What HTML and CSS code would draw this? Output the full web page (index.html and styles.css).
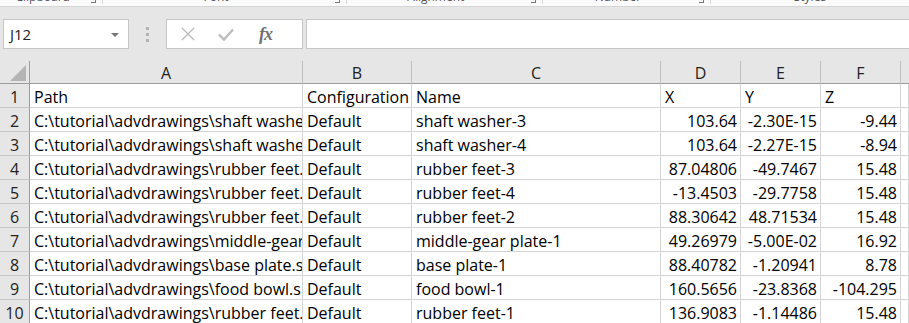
FILE: index.html
```html
<!DOCTYPE html>
<html lang="en">
<head>
  <meta charset="UTF-8" />
  <title>Book1 - Excel</title>
  <link rel="stylesheet" href="styles.css">
</head>
<body>

  <!-- bottom edge of the ribbon, group captions cut off -->
  <div class="ribbon">
    <div class="group g-clip"><span class="caption">Clipboard</span><i class="launch"></i></div>
    <div class="group g-font"><span class="caption">Font</span><i class="launch"></i></div>
    <div class="group g-align"><span class="caption">Alignment</span><i class="launch"></i></div>
    <div class="group g-num"><span class="caption">Number</span><i class="launch"></i></div>
    <div class="group g-styles"><span class="caption">Styles</span></div>
  </div>

  <!-- name box + formula bar -->
  <div class="formula-bar">
    <div class="name-box">
      <span>J12</span>
      <i class="drop"></i>
    </div>
    <div class="grip"><i></i><i></i><i></i></div>
    <div class="fx-buttons">
      <svg class="icon" width="16" height="16" viewBox="0 0 16 16">
        <path d="M2 2 L14 14 M14 2 L2 14" stroke="#bcbcbc" stroke-width="1.4" fill="none"/>
      </svg>
      <svg class="icon" width="18" height="16" viewBox="0 0 18 16">
        <path d="M2 8.5 L7 13.5 L16 3.5" stroke="#bcbcbc" stroke-width="2.4" fill="none"/>
      </svg>
      <span class="fx">fx</span>
    </div>
    <div class="formula-input"></div>
  </div>

  <!-- the sheet -->
  <div class="sheet">
    <div class="corner"><i class="select-all"></i></div>
    <div class="col-head">A</div>
    <div class="col-head">B</div>
    <div class="col-head">C</div>
    <div class="col-head">D</div>
    <div class="col-head">E</div>
    <div class="col-head">F</div>
    <div class="col-head last"></div>

    <div class="row-head">1</div>
    <div class="cell">Path</div>
    <div class="cell">Configuration</div>
    <div class="cell">Name</div>
    <div class="cell">X</div>
    <div class="cell">Y</div>
    <div class="cell">Z</div>
    <div class="cell"></div>

    <div class="row-head">2</div>
    <div class="cell">C:\tutorial\advdrawings\shaft washer.sldprt</div>
    <div class="cell">Default</div>
    <div class="cell">shaft washer-3</div>
    <div class="cell num">103.64</div>
    <div class="cell num">-2.30E-15</div>
    <div class="cell num">-9.44</div>
    <div class="cell"></div>

    <div class="row-head">3</div>
    <div class="cell">C:\tutorial\advdrawings\shaft washer.sldprt</div>
    <div class="cell">Default</div>
    <div class="cell">shaft washer-4</div>
    <div class="cell num">103.64</div>
    <div class="cell num">-2.27E-15</div>
    <div class="cell num">-8.94</div>
    <div class="cell"></div>

    <div class="row-head">4</div>
    <div class="cell">C:\tutorial\advdrawings\rubber feet.sldprt</div>
    <div class="cell">Default</div>
    <div class="cell">rubber feet-3</div>
    <div class="cell num">87.04806</div>
    <div class="cell num">-49.7467</div>
    <div class="cell num">15.48</div>
    <div class="cell"></div>

    <div class="row-head">5</div>
    <div class="cell">C:\tutorial\advdrawings\rubber feet.sldprt</div>
    <div class="cell">Default</div>
    <div class="cell">rubber feet-4</div>
    <div class="cell num">-13.4503</div>
    <div class="cell num">-29.7758</div>
    <div class="cell num">15.48</div>
    <div class="cell"></div>

    <div class="row-head">6</div>
    <div class="cell">C:\tutorial\advdrawings\rubber feet.sldprt</div>
    <div class="cell">Default</div>
    <div class="cell">rubber feet-2</div>
    <div class="cell num">88.30642</div>
    <div class="cell num">48.71534</div>
    <div class="cell num">15.48</div>
    <div class="cell"></div>

    <div class="row-head">7</div>
    <div class="cell">C:\tutorial\advdrawings\middle-gear plate.sldprt</div>
    <div class="cell">Default</div>
    <div class="cell">middle-gear plate-1</div>
    <div class="cell num">49.26979</div>
    <div class="cell num">-5.00E-02</div>
    <div class="cell num">16.92</div>
    <div class="cell"></div>

    <div class="row-head">8</div>
    <div class="cell">C:\tutorial\advdrawings\base plate.sldprt</div>
    <div class="cell">Default</div>
    <div class="cell">base plate-1</div>
    <div class="cell num">88.40782</div>
    <div class="cell num">-1.20941</div>
    <div class="cell num">8.78</div>
    <div class="cell"></div>

    <div class="row-head">9</div>
    <div class="cell">C:\tutorial\advdrawings\food bowl.sldprt</div>
    <div class="cell">Default</div>
    <div class="cell">food bowl-1</div>
    <div class="cell num">160.5656</div>
    <div class="cell num">-23.8368</div>
    <div class="cell num">-104.295</div>
    <div class="cell"></div>

    <div class="row-head">10</div>
    <div class="cell">C:\tutorial\advdrawings\rubber feet.sldprt</div>
    <div class="cell">Default</div>
    <div class="cell">rubber feet-1</div>
    <div class="cell num">136.9083</div>
    <div class="cell num">-1.14486</div>
    <div class="cell num">15.48</div>
    <div class="cell"></div>
  </div>

</body>
</html>
```

FILE: styles.css
```css
body {
  margin: 0;
  width: 909px;
  height: 323px;
  overflow: hidden;
  background: #e6e6e6;
  font-family: "Open Sans", "Liberation Sans", sans-serif;
}

/* ribbon remains */
.ribbon {
  display: flex;
  height: 6px;
  background: #fbfbfb;
  border-bottom: 1px solid #d5d5d5;
  overflow: hidden;
}

.group {
  position: relative;
  display: flex;
  justify-content: center;
  box-sizing: border-box;
  padding-right: 17px;
  border-right: 1px solid #d7d7d7;
  height: 4px;
}

.g-clip { width: 112px; }
.g-font { width: 266px; }
.g-align { width: 214px; }
.g-num { width: 183px; }
.g-styles { width: 218px; padding-right: 0; border-right: none; }

.caption {
  font-size: 12px;
  line-height: 14px;
  margin-top: -10px;
  color: #555;
  white-space: nowrap;
}

.launch {
  position: absolute;
  right: 6px;
  top: -4px;
  width: 4px;
  height: 6px;
  border-right: 1px solid #777;
  border-bottom: 1px solid #777;
}

/* formula bar */
.formula-bar {
  display: flex;
  align-items: stretch;
  height: 30px;
  padding: 12px 0 12px 3px;
}

.name-box {
  display: flex;
  align-items: center;
  justify-content: space-between;
  width: 126px;
  box-sizing: border-box;
  padding: 0 9px 0 6px;
  background: #fff;
  border: 1px solid #c6c6c6;
  font-size: 15px;
  color: #222;
}

.drop {
  width: 0;
  height: 0;
  border-left: 4px solid transparent;
  border-right: 4px solid transparent;
  border-top: 4px solid #777;
  margin-top: 2px;
}

.grip {
  width: 37px;
  display: flex;
  flex-direction: column;
  align-items: center;
  justify-content: center;
  gap: 3px;
}

.grip i {
  width: 3px;
  height: 3px;
  background: #b3b3b3;
}

.fx-buttons {
  display: flex;
  align-items: center;
  width: 137px;
  box-sizing: border-box;
  padding-left: 13px;
  gap: 21px;
  background: #fff;
  border: 1px solid #c6c6c6;
}

.fx {
  font-family: "Liberation Serif", serif;
  font-style: italic;
  font-weight: bold;
  font-size: 18px;
  color: #707070;
  margin-left: 3px;
  letter-spacing: -1px;
}

.formula-input {
  flex: 1;
  margin-left: 3px;
  margin-right: -5px;
  background: #fff;
  border: 1px solid #c6c6c6;
}

/* grid */
.sheet {
  display: grid;
  grid-template-columns: 30px 273px 109px 249px 80px 80px 80px 1fr;
  grid-template-rows: 23px repeat(10, 24px);
  background: #fff;
  font-size: 16px;
  color: #000;
}

.corner {
  background: #e6e6e6;
  border-right: 1px solid #9d9d9d;
  border-bottom: 1px solid #9d9d9d;
  position: relative;
}

.select-all {
  position: absolute;
  left: 10px;
  top: 4px;
  width: 0;
  height: 0;
  border-left: 16px solid transparent;
  border-bottom: 16px solid #b4b4b4;
}

.col-head {
  background: #e6e6e6;
  border-right: 1px solid #c0c0c0;
  border-bottom: 1px solid #9d9d9d;
  text-align: center;
  line-height: 20px;
  padding-top: 2px;
  color: #222;
}

.col-head.last {
  border-right: none;
}

.row-head {
  background: #e6e6e6;
  border-right: 1px solid #9d9d9d;
  border-bottom: 1px solid #c6c6c6;
  text-align: center;
  line-height: 20px;
  padding-top: 3px;
  color: #222;
}

.cell {
  border-right: 1px solid #d4d4d4;
  border-bottom: 1px solid #d4d4d4;
  padding: 3px 3px 0 4px;
  line-height: 20px;
  white-space: nowrap;
  overflow: hidden;
}

.cell.num {
  text-align: right;
}
```
